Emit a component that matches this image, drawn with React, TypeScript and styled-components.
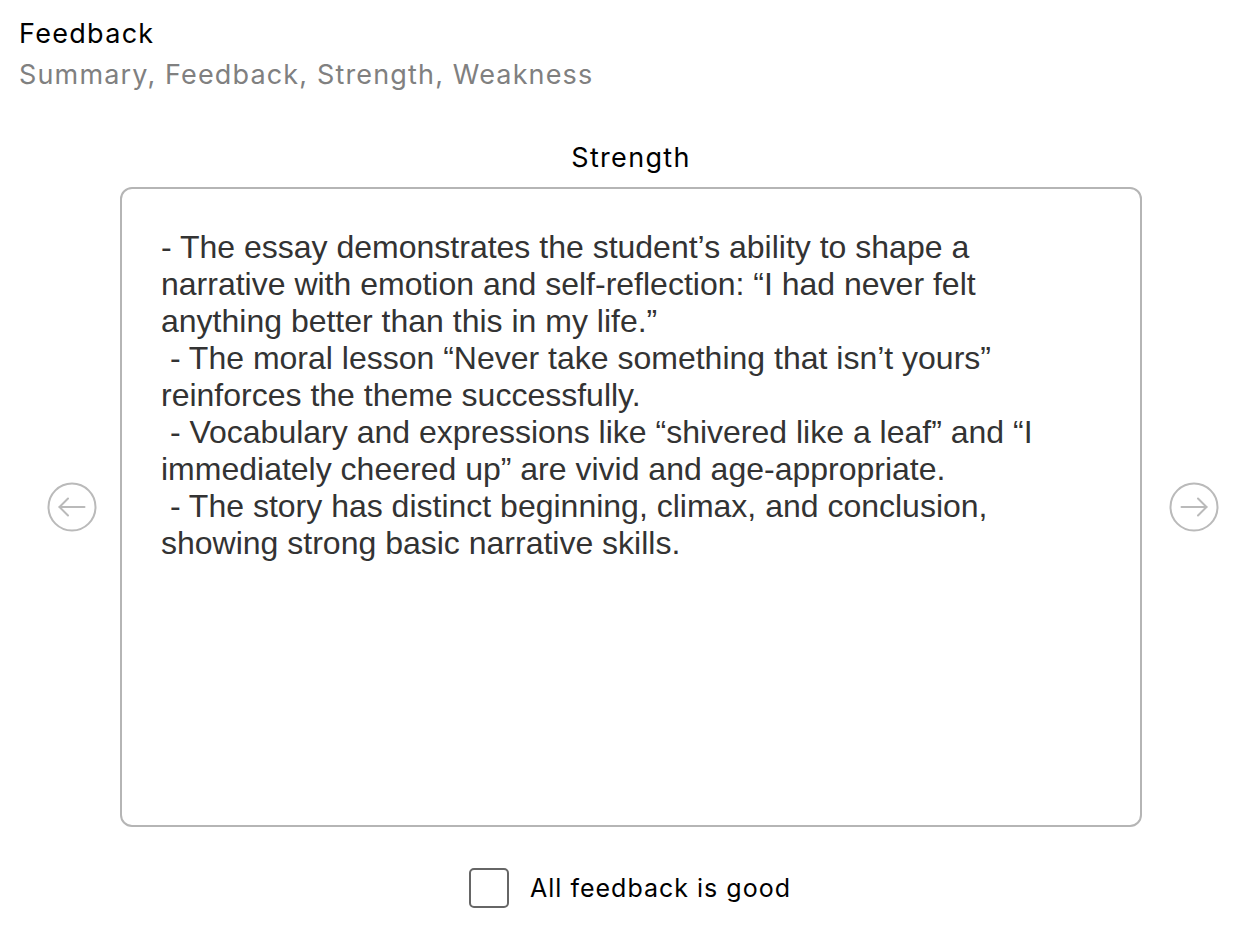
import React from "react";
import styled, { createGlobalStyle } from "styled-components";

const GlobalStyle = createGlobalStyle`
  html, body { margin: 0; padding: 0; background: #ffffff; }
  body { font-family: "Inter", "Noto Sans", sans-serif; }
  * { box-sizing: border-box; }
`;

const Page = styled.main`
  display: flex;
  flex-direction: column;
  padding: 17px 7px 0 19px;
  width: 1248px;
`;

const Header = styled.header`
  display: flex;
  flex-direction: column;
  gap: 8px;
`;

const Title = styled.h1`
  margin: 0;
  font-family: "Inter", sans-serif;
  font-weight: 400;
  font-size: 27px;
  letter-spacing: 1.3px;
  line-height: 33px;
  color: #000;
`;

const Subtitle = styled.p`
  margin: 0;
  font-family: "Inter", sans-serif;
  font-weight: 400;
  font-size: 27px;
  letter-spacing: 1.15px;
  line-height: 33px;
  color: #808080;
`;

const Editor = styled.section`
  display: grid;
  grid-template-columns: 73px 1022px 77px;
  grid-template-rows: auto auto;
  align-items: center;
  row-gap: 14px;
  margin: 52px 0 0 28px;
`;

const SectionLabel = styled.h2`
  grid-column: 2;
  grid-row: 1;
  margin: 0;
  text-align: center;
  font-family: "Inter", sans-serif;
  font-weight: 400;
  font-size: 27px;
  letter-spacing: 1.3px;
  line-height: 30px;
  color: #000;
`;

const NavButton = styled.button<{ $side: "left" | "right" }>`
  grid-row: 2;
  grid-column: ${(p) => (p.$side === "left" ? 1 : 3)};
  justify-self: ${(p) => (p.$side === "left" ? "start" : "end")};
  width: 50px;
  height: 50px;
  padding: 0;
  border: none;
  background: transparent;
  cursor: pointer;
  display: flex;
  align-items: center;
  justify-content: center;
  color: #bababa;
`;

const TextBox = styled.textarea`
  grid-column: 2;
  grid-row: 2;
  width: 1022px;
  height: 640px;
  padding: 40px 40px 40px 39px;
  border: 2px solid #b5b5b5;
  border-radius: 12px;
  resize: none;
  outline: none;
  font-family: "Liberation Sans", Arial, sans-serif;
  font-size: 32px;
  line-height: normal;
  color: #333333;
  background: #fff;
`;

const Footer = styled.label`
  display: flex;
  align-items: center;
  justify-content: center;
  gap: 21px;
  margin: 41px 0 0 0;
  cursor: pointer;
`;

const Box = styled.input`
  appearance: none;
  -webkit-appearance: none;
  margin: 0;
  width: 40px;
  height: 40px;
  border: 2.5px solid #666666;
  border-radius: 5px;
  background: #fff;
`;

const FooterText = styled.span`
  font-family: "Inter", sans-serif;
  font-size: 25px;
  letter-spacing: 1px;
  color: #000;
`;

const ArrowIcon = ({ dir }: { dir: "left" | "right" }) => (
  <svg width="50" height="50" viewBox="0 0 50 50" fill="none" stroke="currentColor" strokeWidth="2" strokeLinecap="round" strokeLinejoin="round">
    <circle cx="25" cy="25" r="23.5" />
    {dir === "left" ? (
      <>
        <path d="M12.5 25H37.5" />
        <path d="M21 16.5L12.5 25L21 33.5" />
      </>
    ) : (
      <>
        <path d="M12.5 25H37.5" />
        <path d="M29 16.5L37.5 25L29 33.5" />
      </>
    )}
  </svg>
);

const TEXT =
  "- The essay demonstrates the student’s ability to shape a narrative with emotion and self-reflection: “I had never felt anything better than this in my life.”\n" +
  " - The moral lesson “Never take something that isn’t yours” reinforces the theme successfully.\n" +
  " - Vocabulary and expressions like “shivered like a leaf” and “I immediately cheered up” are vivid and age-appropriate.\n" +
  " - The story has distinct beginning, climax, and conclusion, showing strong basic narrative skills.";

export default function App() {
  return (
    <>
      <GlobalStyle />
      <Page>
        <Header>
          <Title>Feedback</Title>
          <Subtitle>Summary, Feedback, Strength, Weakness</Subtitle>
        </Header>
        <Editor>
          <SectionLabel>Strength</SectionLabel>
          <NavButton $side="left" aria-label="Previous">
            <ArrowIcon dir="left" />
          </NavButton>
          <TextBox defaultValue={TEXT} spellCheck={false} />
          <NavButton $side="right" aria-label="Next">
            <ArrowIcon dir="right" />
          </NavButton>
        </Editor>
        <Footer>
          <Box type="checkbox" />
          <FooterText>All feedback is good</FooterText>
        </Footer>
      </Page>
    </>
  );
}
